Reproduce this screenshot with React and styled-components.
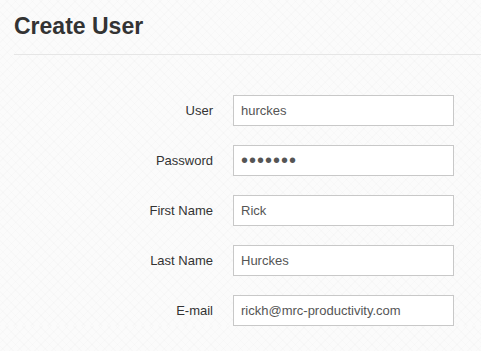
import React from "react";
import styled, { createGlobalStyle } from "styled-components";

const Global = createGlobalStyle`
  html, body { margin: 0; padding: 0; }
  body {
    background-color: #fbfbfb;
    background-image:
      repeating-linear-gradient(45deg, rgba(0,0,0,0.012) 0 1px, transparent 1px 6px),
      repeating-linear-gradient(-45deg, rgba(0,0,0,0.012) 0 1px, transparent 1px 6px);
    font-family: "Liberation Sans", Arial, sans-serif;
    color: #333;
  }
`;

const Page = styled.div`
  padding: 0 0 0 14px;
`;

const Header = styled.div`
  padding-top: 12px;
  height: 42px;
  border-bottom: 1px solid #e6e6e6;
`;

const Title = styled.h1`
  margin: 0;
  font-size: 23px;
  line-height: 28px;
  font-weight: bold;
  color: #333;
`;

const Form = styled.form`
  display: grid;
  grid-template-columns: 199px 221px;
  column-gap: 20px;
  row-gap: 19px;
  padding-top: 40px;
  align-items: center;
`;

const Label = styled.label`
  text-align: right;
  font-size: 13px;
  color: #333;
`;

const Input = styled.input`
  box-sizing: border-box;
  width: 221px;
  height: 31px;
  margin: 0;
  padding: 0 7px;
  border: 1px solid #c8c8c8;
  background: #fff;
  font-family: "Liberation Sans", Arial, sans-serif;
  font-size: ${(p) => (p.$secret ? "20px" : "13px")};
  letter-spacing: ${(p) => (p.$secret ? "1px" : "normal")};
  color: #555;
  outline: none;
`;

const fields = [
  { label: "User", value: "hurckes" },
  { label: "Password", value: "•••••••", secret: true },
  { label: "First Name", value: "Rick" },
  { label: "Last Name", value: "Hurckes" },
  { label: "E-mail", value: "rickh@mrc-productivity.com" },
];

export default function App() {
  return (
    <>
      <Global />
      <Page>
        <Header>
          <Title>Create User</Title>
        </Header>
        <Form>
          {fields.map((f) => (
            <React.Fragment key={f.label}>
              <Label>{f.label}</Label>
              <Input readOnly value={f.value} $secret={f.secret} />
            </React.Fragment>
          ))}
        </Form>
      </Page>
    </>
  );
}
